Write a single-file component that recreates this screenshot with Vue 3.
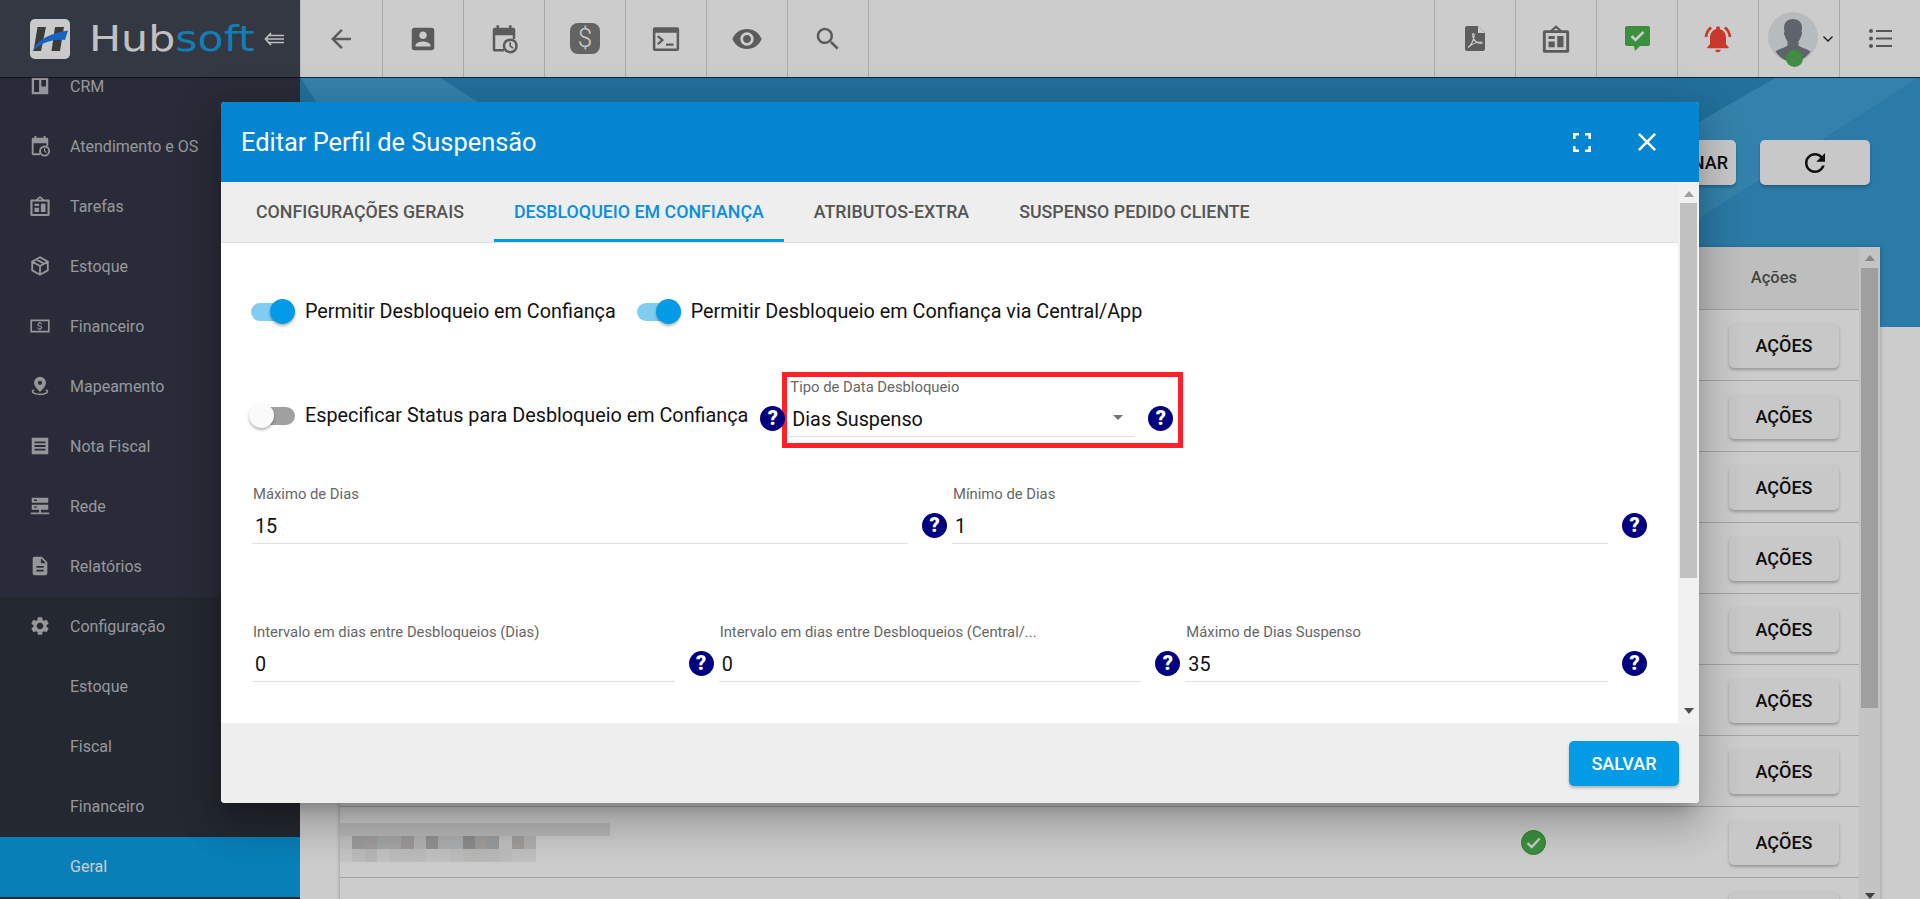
<template>
  <div class="page">
    <aside class="sidebar">
      <div class="brand">
        <svg class="logo" viewBox="0 0 40 40">
          <rect width="40" height="40" rx="5" fill="#fdfdfd" />
          <path d="M7.5 8H16L11 32H3.5zM25 8h9l-4 24h-8.5z" fill="#4a4a4a" />
          <path d="M2.5 33C6 23 16 15 38 11.5L35 21C22 20 10 24 2.5 33Z" fill="#1c7ef0" />
        </svg>
        <div class="brand-name">Hub<span>soft</span></div>
        <svg class="collapse" viewBox="0 0 20 14" fill="none" stroke="currentColor" stroke-width="1.7">
          <path d="M7 1L1.5 7 7 13M5 3.5h15M3 7h17M5 10.5h15" />
        </svg>
      </div>
      <nav class="nav">
        <div class="nav-list">
          <div v-for="item in navItems" :key="item.id" class="nav-item" :class="{ dark: item.dark, active: item.active }">
            <svg v-if="item.icon" class="nav-icon" viewBox="0 0 24 24" fill="currentColor" v-html="item.icon"></svg>
            <span class="nav-label">{{ item.label }}</span>
          </div>
        </div>
      </nav>
    </aside>

    <div class="main">
      <header class="toolbar">
        <div class="tool back">
          <svg class="tool-icon" viewBox="0 0 24 24"><path d="M20 11H7.83l5.59-5.59L12 4l-8 8 8 8 1.41-1.41L7.83 13H20v-2z" /></svg>
        </div>
        <div class="tool">
          <svg class="tool-icon" viewBox="0 0 24 24"><path d="M3 5v14c0 1.1.89 2 2 2h14c1.1 0 2-.9 2-2V5c0-1.1-.9-2-2-2H5c-1.11 0-2 .9-2 2zm12 4c0 1.66-1.34 3-3 3s-3-1.34-3-3 1.34-3 3-3 3 1.34 3 3zm-9 8c0-2 4-3.1 6-3.1s6 1.1 6 3.1v1H6v-1z" /></svg>
        </div>
        <div class="tool">
          <svg class="tool-icon" viewBox="0 0 24 24" v-html="icons.calendar"></svg>
        </div>
        <div class="tool">
          <div class="dollar-box">$</div>
        </div>
        <div class="tool">
          <svg class="tool-icon" viewBox="0 0 24 24"><path fill-rule="evenodd" d="M3 2.5h18A1.5 1.5 0 0 1 22.5 4v16a1.5 1.5 0 0 1-1.5 1.5H3A1.5 1.5 0 0 1 1.5 20V4A1.5 1.5 0 0 1 3 2.5zM3.5 7v12.5h17V7z" /><path d="M6 9l4.5 3.8L6 16.8l-1.2-1.3 3-2.7-3-2.5zM12 15.5h6v1.8h-6z" /></svg>
        </div>
        <div class="tool">
          <svg class="tool-icon eye" viewBox="0 0 24 24"><path d="M12 4.5C7 4.5 2.73 7.61 1 12c1.73 4.39 6 7.5 11 7.5s9.27-3.11 11-7.5c-1.73-4.39-6-7.5-11-7.5zM12 17c-2.76 0-5-2.24-5-5s2.24-5 5-5 5 2.24 5 5-2.24 5-5 5zm0-8c-1.66 0-3 1.34-3 3s1.34 3 3 3 3-1.34 3-3-1.34-3-3-3z" /></svg>
        </div>
        <div class="tool">
          <svg class="tool-icon" viewBox="0 0 24 24"><path d="M15.5 14h-.79l-.28-.27C15.41 12.59 16 11.11 16 9.5 16 5.91 13.09 3 9.5 3S3 5.91 3 9.5 5.91 16 9.5 16c1.61 0 3.09-.59 4.23-1.57l.27.28v.79l5 4.99L20.49 19l-4.99-5zm-6 0C7.01 14 5 11.99 5 9.5S7.01 5 9.5 5 14 7.01 14 9.5 11.99 14 9.5 14z" /></svg>
        </div>

        <div class="toolbar-right">
          <div class="tool first">
            <svg class="pdf" viewBox="0 0 20 25">
              <path d="M2 0h11l7 7v16a2 2 0 0 1-2 2H2a2 2 0 0 1-2-2V2a2 2 0 0 1 2-2z" fill="#757575" />
              <path d="M13 0v7h7z" fill="#fff" />
              <path d="M3 21.5c2.5-1.5 5-6.5 6-10.5.5-2 0-3.5-.6-3.5s-1 1.5-.4 3.5c1 3.5 3.5 6 8 6.5 1.5 0 1.5-1.5 0-1.5-4 0-9 2-13 5.5z" fill="none" stroke="#fff" stroke-width="1.1" />
            </svg>
          </div>
          <div class="tool">
            <svg class="board" viewBox="0 0 24 24" v-html="icons.board"></svg>
          </div>
          <div class="tool">
            <svg class="chat" viewBox="0 0 25 25">
              <path d="M2 0h21a2 2 0 0 1 2 2v16a2 2 0 0 1-2 2h-8l-5 5-1-5H2a2 2 0 0 1-2-2V2a2 2 0 0 1 2-2z" fill="#4bb34f" />
              <path d="M6.5 10l4 4 8-8" fill="none" stroke="#fff" stroke-width="2.6" />
            </svg>
          </div>
          <div class="tool">
            <svg class="bell" viewBox="0 0 24 24"><path d="M7.58 4.08L6.15 2.65C3.75 4.48 2.17 7.3 2.03 10.5h2c.15-2.65 1.51-4.97 3.55-6.42zm12.39 6.42h2c-.15-3.2-1.73-6.02-4.12-7.85l-1.42 1.43c2.02 1.45 3.39 3.77 3.54 6.42zM18 11c0-3.07-1.64-5.64-4.5-6.32V4c0-.83-.67-1.5-1.5-1.5s-1.5.67-1.5 1.5v.68C7.63 5.36 6 7.92 6 11v5l-2 2v1h16v-1l-2-2v-5zm-6 11c.14 0 .27-.01.4-.04.65-.14 1.18-.58 1.44-1.18.1-.24.15-.5.15-.78h-4c.01 1.1.9 2 2.01 2z" /></svg>
          </div>
          <div class="tool user">
            <svg class="avatar" viewBox="0 0 50 56">
              <circle cx="25" cy="25" r="25" fill="#e7eaee" />
              <path d="M25 7c6 0 9 3.5 9 9 0 2-.5 3-.5 4 .8 0 .7 2.5-.4 4-.6 2-1.5 4-2.6 5.5v4c2 2 8 3 12 6C38.5 45.5 31.5 50 25 50S11.5 45.5 7.5 39.5c4-3 10-4 12-6v-4c-1.1-1.5-2-3.5-2.6-5.5-1.1-1.5-1.2-4-.4-4 0-1-.5-2-.5-4 0-5.5 3-9 9-9z" fill="#777d87" />
              <circle cx="26.5" cy="46.5" r="8.5" fill="#4bb34f" />
              <path d="M22 46.5l3 3 6-6" fill="none" stroke="#8a968c" stroke-width="1.3" />
            </svg>
            <svg class="chevron" viewBox="0 0 10 6" fill="none" stroke="#222" stroke-width="1.4"><path d="M.5.5L5 5 9.5.5" /></svg>
          </div>
          <div class="tool last">
            <svg class="list-icon" viewBox="0 0 23 19">
              <circle cx="2" cy="2" r="2" /><circle cx="2" cy="9.5" r="2" /><circle cx="2" cy="17" r="2" />
              <path d="M7 1h16v2H7zM7 8.5h16v2H7zM7 16h16v2H7z" />
            </svg>
          </div>
        </div>
      </header>

      <section class="content">
        <svg class="band" viewBox="0 0 1620 250" preserveAspectRatio="none">
          <rect width="1620" height="250" fill="#2b8cc2" />
          <path d="M0 0H139L178 25V60H39Z" fill="#41a3d8" />
          <path d="M1477 0H1620L1000 398V275Z" fill="#41a3d8" />
          <path d="M1620 0V250H1000V398Z" fill="#3699d1" />
        </svg>

        <div class="top-actions">
          <button class="raised wide">SELECIONAR</button>
          <button class="raised refresh">
            <svg viewBox="0 0 24 24"><path d="M17.65 6.35C16.2 4.9 14.21 4 12 4c-4.42 0-7.99 3.58-7.99 8s3.57 8 7.99 8c3.73 0 6.84-2.55 7.73-6h-2.08c-.82 2.33-3.04 4-5.65 4-3.31 0-6-2.69-6-6s2.69-6 6-6c1.66 0 3.14.69 4.22 1.78L13 11h7V4l-2.35 2.35z" /></svg>
          </button>
        </div>

        <div class="card">
          <div class="table">
            <div class="thead">Ações</div>
            <div v-for="row in rows" :key="row.id" class="row">
              <div class="cell-name">
                <div v-if="row.blur" class="blur">
                  <div v-for="(line, i) in blurLines" :key="i" class="blur-line">
                    <i v-for="(c, j) in line" :key="j" :style="{ background: c }"></i>
                  </div>
                </div>
              </div>
              <div class="cell-status">
                <svg v-if="row.ok" viewBox="0 0 25 25">
                  <circle cx="12.5" cy="12.5" r="12" fill="#4bb34f" stroke="#35a339" />
                  <path d="M6.5 13l4.2 4 8-8.5" fill="none" stroke="#fff" stroke-width="2.4" />
                </svg>
              </div>
              <button class="raised row-btn">AÇÕES</button>
            </div>
          </div>
          <div class="vbar page-bar">
            <span class="arrow up"></span>
            <div class="thumb"></div>
            <span class="arrow down"></span>
          </div>
        </div>
      </section>
    </div>

    <div class="overlay">
      <div class="modal">
        <div class="modal-head">
          <h2>Editar Perfil de Suspensão</h2>
          <svg class="fullscreen" viewBox="0 0 18 19" fill="none" stroke="#fff" stroke-width="2.6">
            <path d="M1.3 6V1.3H6M12 1.3h4.7V6M16.7 13v4.7H12M6 17.7H1.3V13" />
          </svg>
          <svg class="close" viewBox="5 5 14 14" fill="#fff"><path d="M19 6.41L17.59 5 12 10.59 6.41 5 5 6.41 10.59 12 5 17.59 6.41 19 12 13.41 17.59 19 19 17.59 13.41 12z" /></svg>
        </div>

        <div class="modal-middle">
          <div class="modal-scroll">
            <div class="tabs">
              <div v-for="tab in tabs" :key="tab" class="tab" :class="{ current: tab === currentTab }">{{ tab }}</div>
            </div>
            <div class="modal-body">
              <div class="switch-row">
                <label class="switch on"><span class="track"><span class="knob"></span></span></label>
                <span class="switch-text">Permitir Desbloqueio em Confiança</span>
                <label class="switch on second"><span class="track"><span class="knob"></span></span></label>
                <span class="switch-text">Permitir Desbloqueio em Confiança via Central/App</span>
              </div>

              <div class="status-row">
                <div class="status-left">
                  <label class="switch"><span class="track"><span class="knob"></span></span></label>
                  <span class="switch-text">Especificar Status para Desbloqueio em Confiança</span>
                  <span class="help tight">?</span>
                </div>
                <div class="red-box">
                  <div class="field select">
                    <div class="field-label">Tipo de Data Desbloqueio</div>
                    <div class="field-value">Dias Suspenso<span class="caret"></span></div>
                  </div>
                  <span class="help">?</span>
                </div>
              </div>

              <div class="form-row two">
                <div v-for="f in fieldsTwo" :key="f.label" class="form-col">
                  <div class="field">
                    <div class="field-label">{{ f.label }}</div>
                    <div class="field-value">{{ f.value }}</div>
                  </div>
                  <span class="help">?</span>
                </div>
              </div>

              <div class="form-row three">
                <div v-for="f in fieldsThree" :key="f.label" class="form-col">
                  <div class="field">
                    <div class="field-label">{{ f.label }}</div>
                    <div class="field-value">{{ f.value }}</div>
                  </div>
                  <span class="help">?</span>
                </div>
              </div>
            </div>
          </div>
          <div class="vbar modal-bar">
            <span class="arrow up"></span>
            <div class="thumb"></div>
            <span class="arrow down"></span>
          </div>
        </div>

        <div class="modal-foot">
          <button class="save">SALVAR</button>
        </div>
      </div>
    </div>
  </div>
</template>

<script setup>
const icons = {
  calendar:
    '<path fill-rule="evenodd" d="M6 1h2v2h8V1h2v2h1.5A1.5 1.5 0 0 1 21 4.5V12h-2V9H5v11h7v2H4.5A1.5 1.5 0 0 1 3 20.5v-16A1.5 1.5 0 0 1 4.5 3H6z"/><circle cx="17" cy="17.5" r="6"/><circle cx="17" cy="17.5" r="4" fill="var(--hole)"/><path d="M16.3 14.5h1.3v2.7l2 1.5-.8 1-2.5-1.9z"/>',
  board:
    '<path fill-rule="evenodd" d="M12 1l4.5 4H21a1.5 1.5 0 0 1 1.5 1.5v15A1.5 1.5 0 0 1 21 23H3a1.5 1.5 0 0 1-1.5-1.5v-15A1.5 1.5 0 0 1 3 5h4.5zM10 5h4l-2-1.7zM3.8 7.2v13.6h16.4V7.2z"/><path d="M6 9.5h5V12H6zM13 9.5h5v9h-5zM6 14h5v4.5H6z"/>'
}

const navIcons = {
  crm: '<path fill-rule="evenodd" d="M4 3h16a1 1 0 0 1 1 1v17H3V4a1 1 0 0 1 1-1zm9.5 2.5v7h5v-7zM5.5 5.5v13H11v-13z"/>',
  estoque:
    '<path fill="none" stroke="currentColor" stroke-width="2" d="M12 2.5l8.5 4.7v9.6L12 21.5l-8.5-4.7V7.2zM3.5 7.2L12 12l8.5-4.8M12 12v9.5M8 4.8l8.5 4.8"/>',
  financeiro:
    '<path fill-rule="evenodd" d="M1.5 5h21v14h-21zm1.8 1.8v10.4h17.4V6.8z"/><path transform="translate(5.7 5.7) scale(.525)" d="M11.8 10.9c-2.27-.59-3-1.2-3-2.15 0-1.09 1.01-1.85 2.7-1.85 1.78 0 2.44.85 2.5 2.1h2.21c-.07-1.72-1.12-3.3-3.21-3.81V3h-3v2.16c-1.94.42-3.5 1.68-3.5 3.61 0 2.31 1.91 3.46 4.7 4.13 2.5.6 3 1.48 3 2.41 0 .69-.49 1.79-2.7 1.79-2.06 0-2.87-.92-2.98-2.1h-2.2c.12 2.19 1.76 3.42 3.68 3.83V21h3v-2.15c1.95-.37 3.5-1.5 3.5-3.55 0-2.84-2.43-3.81-4.7-4.4z"/>',
  mapa:
    '<path fill-rule="evenodd" d="M12 2a6.5 6.5 0 0 1 6.5 6.5C18.5 13 12 18.5 12 18.5S5.5 13 5.5 8.5A6.5 6.5 0 0 1 12 2zm0 4.2a2.3 2.3 0 1 0 0 4.6 2.3 2.3 0 0 0 0-4.6z"/><path d="M5 15.5c-1.5.7-2 1.5-2 2.5 0 2.3 4 4 9 4s9-1.7 9-4c0-1-.5-1.8-2-2.5l-1 1.4c.8.4 1.2.8 1.2 1.1 0 .9-2.8 2.3-7.2 2.3s-7.2-1.4-7.2-2.3c0-.3.4-.7 1.2-1.1z"/>',
  nota: '<path fill-rule="evenodd" d="M3 3h18v18H3zm3 4v2h12V7zm0 4v2h12v-2zm0 4v2h12v-2z"/>',
  rede: '<path fill-rule="evenodd" d="M3 3h18v5.5H3zm2.5 2v1.5h3V5zM3 10.5h18V16H3zm2.5 2V14h3v-1.5zM11 16h2v3h-2zM2 19h20v2H2z"/>',
  relatorios:
    '<path d="M14 2H6c-1.1 0-1.99.9-1.99 2L4 20c0 1.1.89 2 1.99 2H18c1.1 0 2-.9 2-2V8l-6-6zm2 16H8v-2h8v2zm0-4H8v-2h8v2zm-3-5V3.5L18.5 9H13z"/>',
  config:
    '<path d="M19.14 12.94c.04-.3.06-.61.06-.94 0-.32-.02-.64-.07-.94l2.03-1.58c.18-.14.23-.41.12-.61l-1.92-3.32c-.12-.22-.37-.29-.59-.22l-2.39.96c-.5-.38-1.03-.7-1.62-.94l-.36-2.54c-.04-.24-.24-.41-.48-.41h-3.84c-.24 0-.43.17-.47.41l-.36 2.54c-.59.24-1.13.57-1.62.94l-2.39-.96c-.22-.08-.47 0-.59.22L2.74 8.87c-.12.21-.08.47.12.61l2.03 1.58c-.05.3-.09.63-.09.94s.02.64.07.94l-2.03 1.58c-.18.14-.23.41-.12.61l1.92 3.32c.12.22.37.29.59.22l2.39-.96c.5.38 1.03.7 1.62.94l.36 2.54c.05.24.24.41.48.41h3.84c.24 0 .44-.17.47-.41l.36-2.54c.59-.24 1.13-.56 1.62-.94l2.39.96c.22.08.47 0 .59-.22l1.92-3.32c.12-.22.07-.47-.12-.61l-2.01-1.58zM12 15.6c-1.98 0-3.6-1.62-3.6-3.6s1.62-3.6 3.6-3.6 3.6 1.62 3.6 3.6-1.62 3.6-3.6 3.6z"/>'
}

const navItems = [
  { id: 1, label: 'CRM', icon: navIcons.crm },
  { id: 2, label: 'Atendimento e OS', icon: icons.calendar },
  { id: 3, label: 'Tarefas', icon: icons.board },
  { id: 4, label: 'Estoque', icon: navIcons.estoque },
  { id: 5, label: 'Financeiro', icon: navIcons.financeiro },
  { id: 6, label: 'Mapeamento', icon: navIcons.mapa },
  { id: 7, label: 'Nota Fiscal', icon: navIcons.nota },
  { id: 8, label: 'Rede', icon: navIcons.rede },
  { id: 9, label: 'Relatórios', icon: navIcons.relatorios },
  { id: 10, label: 'Configuração', icon: navIcons.config, dark: true },
  { id: 11, label: 'Estoque', dark: true },
  { id: 12, label: 'Fiscal', dark: true },
  { id: 13, label: 'Financeiro', dark: true },
  { id: 14, label: 'Geral', active: true }
]

const tabs = ['CONFIGURAÇÕES GERAIS', 'DESBLOQUEIO EM CONFIANÇA', 'ATRIBUTOS-EXTRA', 'SUSPENSO PEDIDO CLIENTE']
const currentTab = 'DESBLOQUEIO EM CONFIANÇA'

const fieldsTwo = [
  { label: 'Máximo de Dias', value: '15' },
  { label: 'Mínimo de Dias', value: '1' }
]
const fieldsThree = [
  { label: 'Intervalo em dias entre Desbloqueios (Dias)', value: '0' },
  { label: 'Intervalo em dias entre Desbloqueios (Central/...', value: '0' },
  { label: 'Máximo de Dias Suspenso', value: '35' }
]

const rows = [1, 2, 3, 4, 5, 6, 7, 8, 9].map((id) => ({ id, blur: id === 8, ok: id === 8 }))

// pixelated block hiding a customer name
const blurLines = [
  ['#e6e6e6', '#e6e6e6', '#e6e6e6', '#e6e6e6', '#e6e6e6', '#e6e6e6', '#e6e6e6'],
  ['#f0f0f0', '#c4c4c4', '#c8c6c4', '#ccd0ce', '#cfcfcf', '#c4c0c0', '#e0e0e0', '#b8b6b6', '#d8dadc', '#d8dadc', '#b0b0b0', '#c8c6c4', '#c0c2c4', '#f0f0f0', '#c8c6c4', '#dcdcde'],
  ['#f6f6f6', '#eaeaea', '#e4e4e4', '#f2f2f2', '#ececec', '#ececec', '#eaeaea', '#f0f0f0', '#f0f0f0', '#ececec', '#e8e8e4', '#e6e6e6', '#e8e8ec', '#ececec', '#f0f0f0', '#f0f0f0']
]
</script>

<style scoped>
.page {
  position: relative;
  display: flex;
  width: 1920px;
  height: 899px;
  overflow: hidden;
  background: #fff;
  font-family: Roboto, "Liberation Sans", sans-serif;
}

/* sidebar */
.sidebar {
  width: 300px;
  flex-shrink: 0;
  display: flex;
  flex-direction: column;
  background: #343846;
}
.brand {
  position: relative;
  z-index: 2;
  height: 77px;
  flex-shrink: 0;
  display: flex;
  align-items: center;
  padding-left: 30px;
  background: #424653;
  box-shadow: 0 1px 1px rgba(0, 0, 0, 0.5);
}
.logo {
  width: 40px;
  height: 40px;
}
.brand-name {
  margin-left: 19px;
  width: 175px;
  font-family: "DejaVu Sans", sans-serif;
  font-size: 35px;
  line-height: 40px;
  color: #f2f2f2;
  white-space: nowrap;
  transform: scaleX(1.22);
  transform-origin: left center;
}
.brand-name span {
  color: #139fe3;
}
.collapse {
  width: 20px;
  height: 14px;
  color: #f0f0f0;
}
.nav {
  --hole: #343846;
  flex: 1;
  overflow: hidden;
}
.nav-list {
  margin-top: -20px;
}
.nav-item {
  height: 60px;
  box-sizing: border-box;
  padding: 0 0 2px 70px;
  display: flex;
  align-items: center;
  color: #bdbec3;
  font-size: 16px;
}
.nav-item.dark {
  background: #2e323d;
}
.nav-item.active {
  background: #0c9fe6;
  color: #fff;
}
.nav-icon {
  width: 22px;
  height: 22px;
  margin-left: -41px;
  margin-right: 19px;
  color: #bbbcc0;
}

/* top bar */
.main {
  flex: 1;
  min-width: 0;
  display: flex;
  flex-direction: column;
}
.toolbar {
  --hole: #fff;
  height: 77px;
  flex-shrink: 0;
  display: flex;
  background: #fff;
  position: relative;
  z-index: 1;
  box-shadow: 0 1px 0 rgba(0, 30, 50, 0.8);
}
.tool {
  width: 81px;
  height: 77px;
  flex-shrink: 0;
  display: flex;
  align-items: center;
  justify-content: center;
  border-right: 1px solid #d5d5d5;
  box-sizing: border-box;
}
.tool.back {
  width: 83px;
}
.toolbar-right {
  margin-left: auto;
  display: flex;
}
.tool.first {
  border-left: 1px solid #d5d5d5;
  width: 82px;
}
.tool.last {
  width: 80px;
  border-right: 0;
}
.tool-icon {
  width: 30px;
  height: 30px;
  fill: #727272;
}
.tool-icon.eye {
  width: 32px;
  height: 32px;
}
.dollar-box {
  width: 30px;
  height: 31px;
  border-radius: 8px;
  background: #7c7c7c;
  color: #fff;
  font-size: 26px;
  font-weight: 300;
  line-height: 30px;
  text-align: center;
}
.pdf {
  width: 20px;
  height: 25px;
}
.board {
  width: 30px;
  height: 30px;
  fill: #727272;
}
.chat {
  width: 25px;
  height: 25px;
}
.bell {
  width: 32px;
  height: 32px;
  fill: #fb4638;
}
.tool.user {
  justify-content: flex-start;
  padding-left: 9px;
  align-items: flex-start;
}
.avatar {
  width: 50px;
  height: 56px;
  margin-top: 12px;
  flex-shrink: 0;
}
.chevron {
  width: 10px;
  height: 6px;
  margin: 36px 0 0 5px;
}
.list-icon {
  width: 23px;
  height: 19px;
  fill: #6b6b6b;
}

/* page behind the dialog */
.content {
  flex: 1;
  min-height: 0;
  position: relative;
  padding: 63px 40px 0;
  background: #fff;
}
.band {
  position: absolute;
  top: 0;
  left: 0;
  width: 100%;
  height: 250px;
}
.top-actions {
  position: relative;
  display: flex;
  justify-content: flex-end;
  gap: 24px;
  padding-right: 10px;
}
.raised {
  height: 45px;
  border: 0;
  border-radius: 5px;
  background: #fafafa;
  color: #111;
  font-family: inherit;
  font-size: 18px;
  font-weight: 500;
  box-shadow: 0 2px 3px rgba(0, 0, 0, 0.25);
}
.wide {
  width: 170px;
  text-align: right;
  padding-right: 8px;
}
.refresh {
  width: 110px;
  display: flex;
  align-items: center;
  justify-content: center;
}
.refresh svg {
  width: 30px;
  height: 30px;
  fill: #111;
}
.card {
  position: relative;
  margin-top: 62px;
  height: 655px;
  display: flex;
  background: #fff;
  box-shadow: 0 1px 4px rgba(0, 0, 0, 0.3);
}
.table {
  flex: 1;
  min-width: 0;
}
.thead {
  height: 62px;
  background: #eeeeee;
  border-bottom: 1px solid #ccc;
  padding-right: 62px;
  line-height: 61px;
  text-align: right;
  color: #555;
  font-size: 16.5px;
  font-weight: 500;
}
.row {
  height: 71px;
  box-sizing: border-box;
  display: grid;
  grid-template-columns: 1fr 208px 110px;
  align-items: center;
  padding-right: 20px;
  border-bottom: 1px solid #ccc;
}
.row-btn {
  width: 110px;
}
.cell-status svg {
  display: block;
  width: 25px;
  height: 25px;
}
.blur {
  width: 270px;
}
.blur-line {
  height: 13px;
  display: flex;
}
.blur-line i {
  flex: 1;
  display: block;
}
.blur-line:nth-child(n + 2) {
  padding-right: 74px;
}

/* fake scrollbars */
.vbar {
  width: 21px;
  flex-shrink: 0;
  display: flex;
  flex-direction: column;
  align-items: center;
}
.thumb {
  width: 17px;
}
.arrow {
  display: block;
  width: 0;
  height: 0;
  border-left: 5.5px solid transparent;
  border-right: 5.5px solid transparent;
}
.arrow.up {
  border-bottom: 6px solid #a8a8a8;
}
.arrow.down {
  margin-top: auto;
  border-top: 6px solid #505050;
}
.page-bar {
  background: #f5f5f5;
  padding: 8px 0 3px;
  box-sizing: border-box;
}
.page-bar .thumb {
  margin-top: 7px;
  height: 440px;
  background: #c7c7c7;
}
.modal-bar {
  background: #f1f1f1;
  padding: 9px 0;
  box-sizing: border-box;
}
.modal-bar .thumb {
  margin-top: 6px;
  height: 375px;
  background: #c1c1c1;
}
.modal-bar .arrow.up {
  border-bottom-color: #a0a0a0;
}

/* dialog */
.overlay {
  position: absolute;
  inset: 0;
  z-index: 5;
  display: flex;
  align-items: center;
  justify-content: center;
  background: rgba(0, 0, 0, 0.2);
}
.modal {
  width: 1478px;
  height: 701px;
  margin-top: 6px;
  display: flex;
  flex-direction: column;
  border-radius: 4px;
  overflow: hidden;
  background: #fff;
  box-shadow: 0 11px 15px -7px rgba(0, 0, 0, 0.2), 0 24px 38px 3px rgba(0, 0, 0, 0.14), 0 9px 46px 8px rgba(0, 0, 0, 0.12);
}
.modal-head {
  height: 80px;
  flex-shrink: 0;
  display: flex;
  align-items: center;
  padding: 0 43px 0 20px;
  background: #0385d1;
  color: #fff;
}
.modal-head h2 {
  margin: 0;
  flex: 1;
  font-size: 25.4px;
  font-weight: 400;
}
.fullscreen {
  width: 18px;
  height: 19px;
  margin-right: 47px;
}
.close {
  width: 18px;
  height: 18px;
}
.modal-middle {
  flex: 1;
  min-height: 0;
  display: flex;
}
.modal-scroll {
  flex: 1;
  min-width: 0;
  display: flex;
  flex-direction: column;
}
.tabs {
  height: 61px;
  flex-shrink: 0;
  box-sizing: border-box;
  display: flex;
  gap: 10px;
  padding-left: 15px;
  background: #eeeeee;
  border-bottom: 1px solid #e0e0e0;
}
.tab {
  padding: 0 20px;
  line-height: 60px;
  height: 60px;
  box-sizing: border-box;
  color: #555;
  font-size: 17.8px;
  font-weight: 500;
  white-space: nowrap;
}
.tab.current {
  color: #0a8fe0;
  border-bottom: 3px solid #039be5;
}
.modal-body {
  flex: 1;
  padding: 56px 26px 0 31px;
  color: #111;
}
.switch-row,
.status-left {
  display: flex;
  align-items: center;
  margin-left: -1px;
}
.switch {
  display: flex;
  align-items: center;
  width: 44px;
  height: 25px;
  flex-shrink: 0;
  margin-right: 10px;
}
.switch.second {
  margin-left: 21px;
}
.track {
  width: 100%;
  display: flex;
  align-items: center;
  height: 18px;
  border-radius: 9px;
  background: #a0a0a0;
}
.knob {
  display: block;
  flex-shrink: 0;
  width: 25px;
  height: 25px;
  margin-left: -2px;
  border-radius: 50%;
  background: #fafafa;
  box-shadow: 0 2px 3px rgba(0, 0, 0, 0.3);
}
.switch.on .track {
  justify-content: flex-end;
  background: #81cdf2;
}
.switch.on .knob {
  margin-left: 0;
  background: #039be5;
}
.switch-text {
  font-size: 19.8px;
  line-height: 25px;
  white-space: nowrap;
}
.status-row {
  display: flex;
  align-items: flex-start;
  margin-top: 48px;
}
.status-left {
  margin-top: 28px;
}
.help {
  width: 25px;
  height: 25px;
  flex-shrink: 0;
  margin-bottom: 6px;
  border-radius: 50%;
  background: #000080;
  color: #fff;
  font-size: 20px;
  font-weight: 900;
  line-height: 25px;
  text-align: center;
}
.help.tight {
  margin: 6px -3px 0 12px;
  position: relative;
  z-index: 1;
}
.red-box {
  width: 401px;
  height: 76px;
  box-sizing: border-box;
  border: 5px solid #ff2029;
  display: flex;
  align-items: flex-end;
  padding: 0 5px 6px 2px;
}
.red-box .help {
  margin-bottom: 6px;
  margin-left: 14px;
}
.field {
  flex: 1;
  min-width: 0;
  border-bottom: 1px solid #e0e0e0;
}
.field-label {
  height: 18px;
  padding-left: 1px;
  color: #666;
  font-size: 14.8px;
  line-height: 18px;
  white-space: nowrap;
}
.field-value {
  position: relative;
  height: 30px;
  margin: 9px 0 1px;
  padding-left: 3px;
  color: #111;
  font-size: 19.8px;
  line-height: 30px;
}
.caret {
  position: absolute;
  right: 11px;
  top: 10px;
  width: 0;
  height: 0;
  border-left: 5px solid transparent;
  border-right: 5px solid transparent;
  border-top: 5px solid #757575;
}
.form-row {
  display: grid;
}
.form-row.two {
  grid-template-columns: 1fr 1fr;
  margin-top: 37px;
}
.form-row.three {
  grid-template-columns: 1fr 1fr 1fr;
  margin-top: 79px;
}
.form-col {
  display: flex;
  align-items: flex-end;
  min-width: 0;
  padding-right: 5px;
}
.form-col .help {
  margin-left: 14px;
}
.modal-foot {
  height: 80px;
  flex-shrink: 0;
  display: flex;
  align-items: center;
  justify-content: flex-end;
  padding-right: 20px;
  box-sizing: border-box;
  background: #eeeeee;
}
.save {
  width: 110px;
  height: 45px;
  border: 0;
  border-radius: 5px;
  background: #039be5;
  color: #fff;
  font-family: inherit;
  font-size: 18px;
  font-weight: 500;
  box-shadow: 0 2px 3px rgba(0, 0, 0, 0.25);
}
</style>
